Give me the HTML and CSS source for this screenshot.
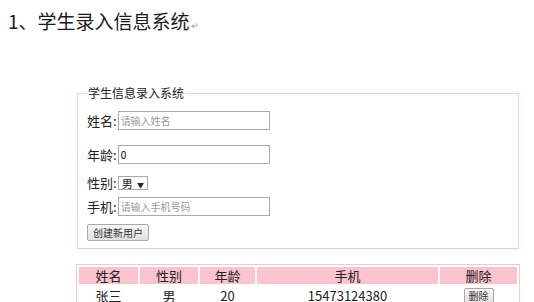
FILE: index.html
```
<!DOCTYPE html>
<html lang="zh-CN">
<head>
  <meta charset="UTF-8">
  <title>学生录入信息系统</title>
  <link rel="stylesheet" href="styles.css">
</head>
<body>

  <div class="doc-title">1、学生录入信息系统<span class="para-mark">↵</span></div>

  <fieldset class="entry">
    <legend>学生信息录入系统</legend>
    <div class="row row-name">
      <label>姓名:</label>
      <input type="text" class="field" placeholder="请输入姓名">
    </div>
    <div class="row row-age">
      <label>年龄:</label>
      <input type="text" class="field" value="0">
    </div>
    <div class="row row-sex">
      <label>性别:</label>
      <span class="select">男 <i>▼</i></span>
    </div>
    <div class="row row-phone">
      <label>手机:</label>
      <input type="text" class="field" placeholder="请输入手机号码">
    </div>
    <div class="row row-btn">
      <button class="btn">创建新用户</button>
    </div>
  </fieldset>

  <table class="list">
    <tr>
      <th class="c-name">姓名</th>
      <th class="c-sex">性别</th>
      <th class="c-age">年龄</th>
      <th class="c-phone">手机</th>
      <th class="c-del">删除</th>
    </tr>
    <tr>
      <td>张三</td>
      <td>男</td>
      <td>20</td>
      <td>15473124380</td>
      <td><button class="btn btn-del">删除</button></td>
    </tr>
  </table>

</body>
</html>
```

FILE: styles.css
```
body {
  margin: 0;
  font-family: "Noto Sans CJK SC", "Liberation Sans", sans-serif;
  color: #222;
  background: #fff;
}

.doc-title {
  margin: 9px 0 0 8px;
  font-size: 19px;
  line-height: 24px;
  color: #1a1a1a;
}

.para-mark {
  font-size: 9px;
  color: #999;
  margin-left: 1px;
}

.entry {
  width: 422px;
  margin: 48px 0 0 77px;
  padding: 4px 9px 7px;
  border: 1px solid #f3cdd4;
}

.entry legend {
  padding: 0 1px;
  font-size: 12px;
  line-height: 14px;
}

.row {
  display: flex;
  align-items: center;
  font-size: 13px;
  line-height: 14px;
}

.row-name { margin-top: 7px; }
.row-age { margin-top: 15px; }
.row-sex { margin-top: 12px; }
.row-phone { margin-top: 7px; }
.row-btn { margin-top: 8px; }

.field {
  width: 146px;
  height: 13px;
  padding: 2px 2px;
  margin: 0 0 0 1px;
  border: 1px solid #a9a9a9;
  font-family: inherit;
  font-size: 10px;
}

.field::placeholder {
  color: #999;
}

.select {
  display: inline-block;
  height: 12px;
  margin-left: 1px;
  padding: 0 3px;
  border: 1px solid #a9a9a9;
  font-size: 11px;
  line-height: 12px;
}

.select i {
  font-style: normal;
  font-size: 7px;
  margin-left: 2px;
}

.btn {
  height: 17px;
  padding: 0 5px;
  border: 1px solid #a9a9a9;
  border-radius: 2px;
  background: linear-gradient(#f6f6f6, #e1e1e1);
  font-family: inherit;
  font-size: 10px;
  line-height: 14px;
  color: #333;
}

.list {
  margin: 15px 0 0 76px;
  border: 1px solid #f6c6cf;
  border-spacing: 2px;
  font-size: 13px;
  line-height: 17px;
  text-align: center;
}

.list th {
  background: #fbc3cd;
  font-weight: normal;
  height: 17px;
  padding: 0;
}

.list td {
  height: 17px;
  padding: 0;
}

.c-name { width: 59px; }
.c-sex { width: 58px; }
.c-age { width: 55px; }
.c-phone { width: 181px; }
.c-del { width: 77px; }

.btn-del {
  padding: 0 4px;
}
```
